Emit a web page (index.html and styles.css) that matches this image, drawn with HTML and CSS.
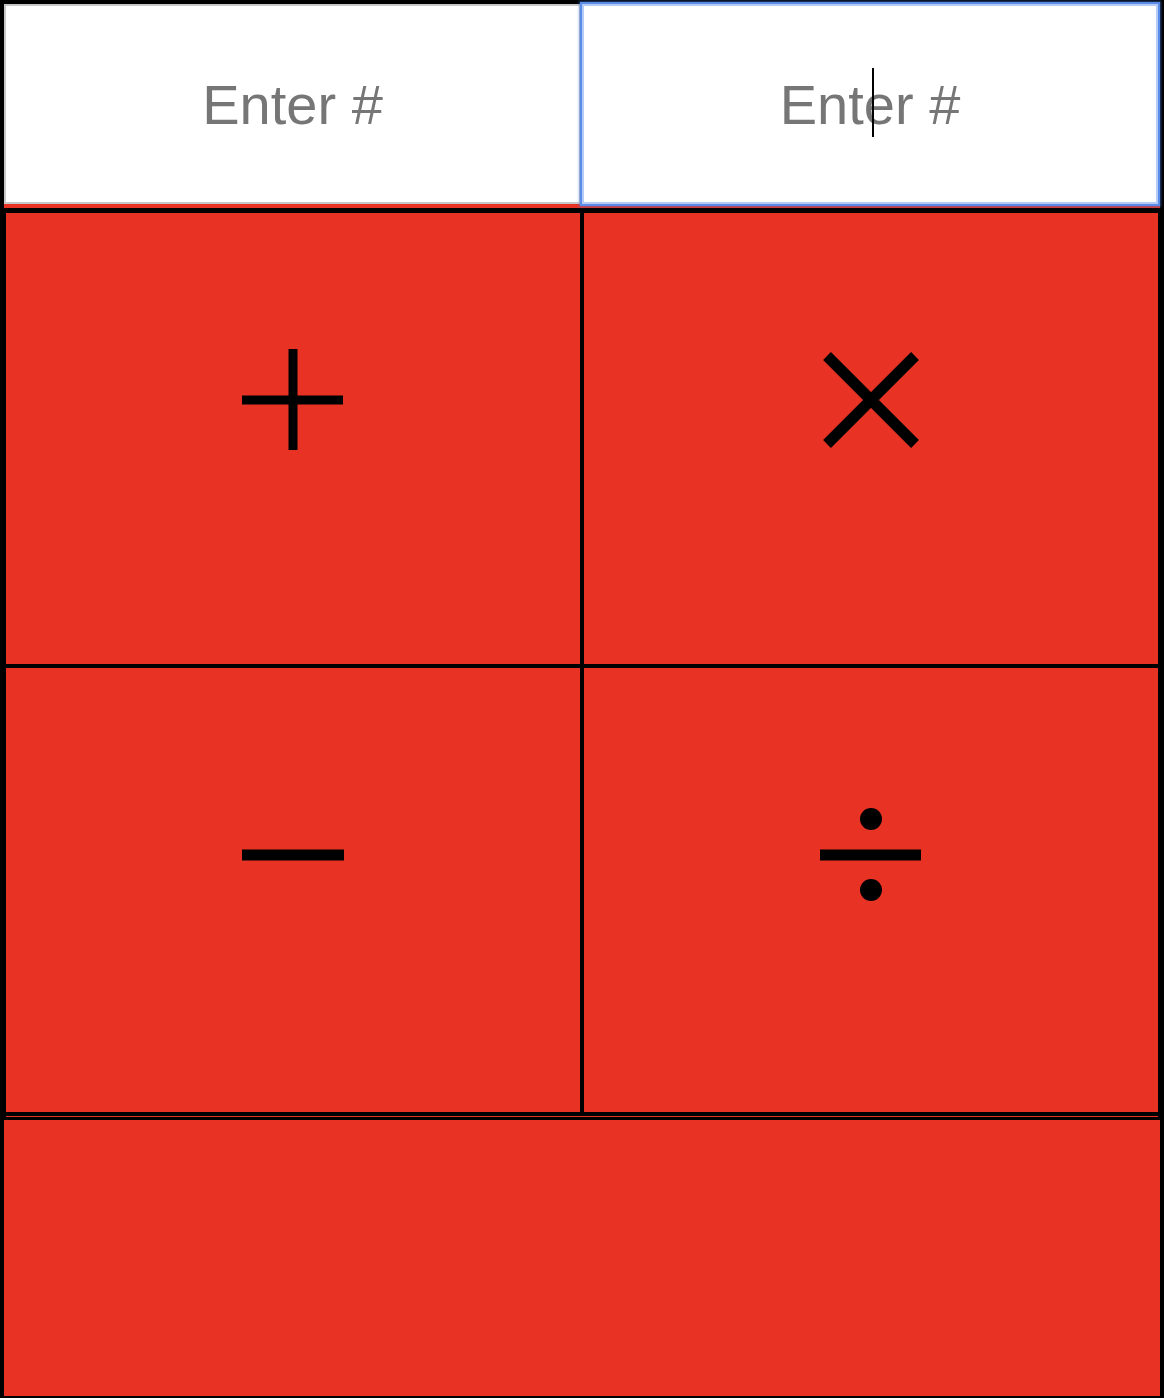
FILE: index.html
```html
<!DOCTYPE html>
<html lang="en">
<head>
<meta charset="utf-8">
<title>Calculator</title>
<link rel="stylesheet" href="styles.css">
</head>
<body>
<div class="app">
  <div class="inputs">
    <input class="num" type="text" placeholder="Enter #">
    <div class="field-focus">
      <input class="num num-focus" type="text" placeholder="Enter #">
      <span class="caret" aria-hidden="true"></span>
    </div>
  </div>
  <div class="pad">
    <button class="op" aria-label="+">
      <svg class="glyph" viewBox="0 0 110 110" width="110" height="110"><path d="M4 55H105M55 4V105" stroke="#000" stroke-width="9" fill="none"/></svg>
    </button>
    <button class="op" aria-label="×">
      <svg class="glyph" viewBox="0 0 110 110" width="110" height="110"><path d="M11 11L99 99M99 11L11 99" stroke="#000" stroke-width="11" fill="none"/></svg>
    </button>
    <button class="op" aria-label="−">
      <svg class="glyph" viewBox="0 0 110 110" width="110" height="110"><path d="M4 55H106" stroke="#000" stroke-width="11" fill="none"/></svg>
    </button>
    <button class="op" aria-label="÷">
      <svg class="glyph" viewBox="0 0 110 110" width="110" height="110"><path d="M4 55H105" stroke="#000" stroke-width="11" fill="none"/><circle cx="55" cy="19" r="11"/><circle cx="55" cy="90" r="11"/></svg>
    </button>
  </div>
  <div class="sep"></div>
  <button class="result" aria-label="result"></button>
</div>
</body>
</html>
```
FILE: styles.css
```css
html, body {
  margin: 0;
  padding: 0;
  background: #000;
}
body {
  width: 1164px;
  height: 1398px;
  overflow: hidden;
  padding-top: 4px;
  box-sizing: border-box;
  font-family: "Liberation Sans", Arial, sans-serif;
}
.app {
  width: 1156px;
  margin: 0 4px;
}
.inputs {
  display: flex;
  height: 204px;
  background: #e83324;
  align-items: flex-start;
}
.num {
  box-sizing: border-box;
  height: 200px;
  width: 577px;
  margin: 0;
  border: 2px solid #c7c7c7;
  background: #fff;
  font-family: "Liberation Sans", Arial, sans-serif;
  font-size: 56px;
  text-align: center;
  color: #000;
  caret-color: transparent;
  outline: none;
  padding: 0;
}
.num::placeholder {
  color: #767676;
}
.field-focus {
  position: relative;
  margin-left: 1px;
  width: 576px;
  height: 200px;
}
.num-focus {
  display: block;
  width: 576px;
  border: 2px solid #b3cbf6;
  box-shadow: 0 0 0 2px #5b8de8, 0 0 2px 3px rgba(70, 120, 225, 0.55);
}
.caret {
  position: absolute;
  left: 290px;
  top: 64px;
  width: 2px;
  height: 69px;
  background: #000;
}
.pad {
  display: grid;
  grid-template-columns: 574px 574px;
  grid-template-rows: 451px 444px;
  gap: 4px;
  padding: 5px 2px 4px 2px;
  background: #000;
}
.op {
  background: #e83324;
  border: none;
  margin: 0;
  padding: 132px 0 0 0;
  display: flex;
  justify-content: center;
  align-items: flex-start;
  cursor: pointer;
}
.glyph {
  display: block;
}
.sep {
  height: 1px;
  margin: 0 2px 3px 2px;
  background: #e83324;
}
.result {
  display: block;
  width: 1156px;
  height: 276px;
  margin: 0;
  padding: 0;
  border: none;
  background: #e83324;
}
```
